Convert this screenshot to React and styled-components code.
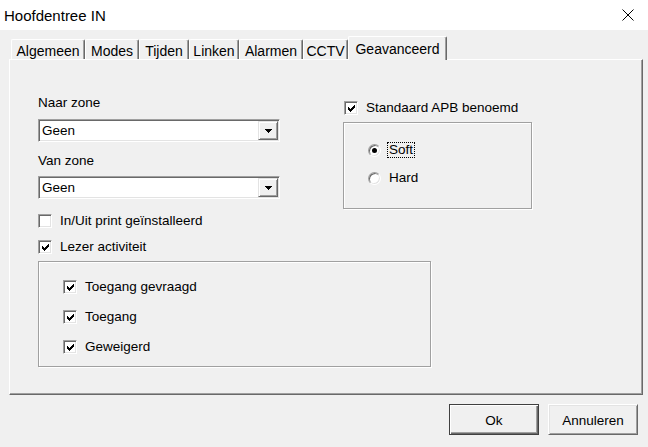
import React from 'react';
import styled, { createGlobalStyle } from 'styled-components';

const Global = createGlobalStyle`
  html, body { margin: 0; padding: 0; background: #f0f0f0; }
  #root { width: 648px; height: 447px; }
`;

const Window = styled.div`
  width: 648px;
  height: 447px;
  display: flex;
  flex-direction: column;
  background: #f0f0f0;
  overflow: hidden;
  font-family: "Liberation Sans", Arial, sans-serif;
  font-size: 13.5px;
  color: #000;
`;

const TitleBar = styled.div`
  flex: none;
  height: 30px;
  background: #fff;
  display: flex;
  align-items: center;
  justify-content: space-between;
  padding-left: 4px;
`;

const Title = styled.span`
  font-size: 15px;
  line-height: 30px;
  padding-top: 2px;
`;

const CloseButton = styled.div`
  width: 40px;
  height: 30px;
  display: flex;
  align-items: center;
  justify-content: center;
`;

const Body = styled.div`
  flex: 1;
  display: flex;
  flex-direction: column;
  padding: 6px 5px 0 9px;
`;

const TabStrip = styled.div`
  display: flex;
  align-items: flex-end;
  height: 23px;
  padding-left: 2px;
`;

const Tab = styled.div`
  box-sizing: border-box;
  width: ${(p) => p.$w}px;
  height: ${(p) => (p.$active ? 24 : 20)}px;
  margin-bottom: ${(p) => (p.$active ? -1 : 0)}px;
  position: relative;
  z-index: ${(p) => (p.$active ? 1 : 0)};
  background: #f0f0f0;
  border-top: 1px solid #fff;
  border-left: 1px solid #fff;
  border-right: 1px solid #696969;
  border-radius: 2px 2px 0 0;
  box-shadow: inset -1px 0 0 #a0a0a0;
  display: flex;
  align-items: center;
  justify-content: center;
  padding-top: ${(p) => (p.$active ? 0 : 2)}px;
  font-size: 14px;
  line-height: 16px;
  white-space: nowrap;
`;

const Panel = styled.div`
  box-sizing: border-box;
  width: 634px;
  height: 336px;
  border-top: 1px solid #fff;
  border-left: 1px solid #fff;
  border-right: 1px solid #696969;
  border-bottom: 1px solid #696969;
  box-shadow: inset -1px -1px 0 #a0a0a0;
  padding: 35px 0 0 28px;
  display: grid;
  grid-template-columns: 305px 189px;
  grid-template-rows: auto auto;
  align-content: start;
  row-gap: 6px;
  align-items: start;
`;

const LeftColumn = styled.div`
  display: flex;
  flex-direction: column;
  width: 242px;
`;

const RightColumn = styled.div`
  display: flex;
  flex-direction: column;
  margin-top: 5px;
`;

const FieldLabel = styled.div`
  line-height: 16px;
  height: 16px;
  margin-top: ${(p) => p.$mt || 0}px;
`;

const Select = styled.div`
  box-sizing: border-box;
  width: 242px;
  height: 23px;
  margin-top: ${(p) => p.$mt || 0}px;
  background: #fff;
  border: 1px solid;
  border-color: #a0a0a0 #fff #fff #a0a0a0;
  box-shadow: inset 1px 1px 0 #696969, inset -1px -1px 0 #e3e3e3;
  padding: 1px 1px 1px 3px;
  display: flex;
  align-items: center;
  justify-content: space-between;
`;

const SelectValue = styled.span`
  line-height: 16px;
  padding-top: 1px;
`;

const DropButton = styled.div`
  box-sizing: border-box;
  width: 20px;
  height: 19px;
  background: #f0f0f0;
  border: 1px solid;
  border-color: #e3e3e3 #696969 #696969 #e3e3e3;
  box-shadow: inset 1px 1px 0 #fff, inset -1px -1px 0 #a0a0a0;
  display: flex;
  align-items: center;
  justify-content: center;
`;

const CheckRow = styled.div`
  display: flex;
  align-items: center;
  gap: 8px;
  height: 16px;
  line-height: 16px;
  margin-top: ${(p) => p.$mt || 0}px;
  margin-left: ${(p) => p.$ml || 0}px;
`;

const Box = styled.div`
  box-sizing: border-box;
  flex: none;
  width: 14px;
  height: 14px;
  background: #fff;
  border: 1px solid;
  border-color: #a0a0a0 #fff #fff #a0a0a0;
  box-shadow: inset 1px 1px 0 #696969, inset -1px -1px 0 #e3e3e3;
  display: flex;
  align-items: center;
  justify-content: center;
`;

const GroupBox = styled.div`
  box-sizing: border-box;
  width: ${(p) => p.$w}px;
  height: ${(p) => p.$h}px;
  border: 1px solid #a0a0a0;
  box-shadow: 1px 1px 0 #fff, inset 1px 1px 0 #fff;
  padding: ${(p) => p.$pt}px 0 0 24px;
  display: flex;
  flex-direction: column;
  gap: ${(p) => p.$gap}px;
  margin-top: ${(p) => p.$mt || 0}px;
`;

const BottomGroup = styled.div`
  grid-column: 1 / span 2;
`;

const RadioRow = styled.div`
  display: flex;
  align-items: center;
  gap: 6px;
  height: 16px;
  line-height: 14px;
`;

const RadioCircle = styled.div`
  box-sizing: border-box;
  flex: none;
  width: 13px;
  height: 13px;
  border-radius: 50%;
  background: #fff;
  border: 1px solid;
  border-color: #a0a0a0 #fff #fff #a0a0a0;
  box-shadow: inset 1px 1px 0 #696969, inset -1px -1px 0 #e3e3e3;
  display: flex;
  align-items: center;
  justify-content: center;
  &::after {
    content: '';
    display: ${(p) => (p.$on ? 'block' : 'none')};
    width: 5px;
    height: 5px;
    border-radius: 50%;
    background: #000;
  }
`;

const RadioLabel = styled.span`
  border: 1px dotted ${(p) => (p.$focus ? '#000' : 'transparent')};
  padding: 0 1px;
`;

const Footer = styled.div`
  display: flex;
  justify-content: flex-end;
  gap: 9px;
  padding: 9px 5px 0 0;
`;

const Button = styled.div`
  box-sizing: border-box;
  width: 90px;
  height: 31px;
  background: #f0f0f0;
  border: 1px solid;
  border-color: ${(p) => (p.$default ? '#404040' : '#fff #696969 #696969 #fff')};
  box-shadow: ${(p) =>
    p.$default
      ? 'inset 1px 1px 0 #fff, inset -1px -1px 0 #696969, inset -2px -2px 0 #a0a0a0'
      : 'inset 1px 1px 0 #e3e3e3, inset -1px -1px 0 #a0a0a0'};
  display: flex;
  align-items: center;
  justify-content: center;
  padding-top: 1px;
`;

const Check = () => (
  <svg width="7" height="7" viewBox="0 0 7 7" shapeRendering="crispEdges">
    <rect x="0" y="2" width="1" height="3" fill="#000" />
    <rect x="1" y="3" width="1" height="3" fill="#000" />
    <rect x="2" y="4" width="1" height="3" fill="#000" />
    <rect x="3" y="3" width="1" height="3" fill="#000" />
    <rect x="4" y="2" width="1" height="3" fill="#000" />
    <rect x="5" y="1" width="1" height="3" fill="#000" />
    <rect x="6" y="0" width="1" height="3" fill="#000" />
  </svg>
);

const Arrow = () => (
  <svg width="7" height="4" viewBox="0 0 7 4" shapeRendering="crispEdges">
    <polygon points="0,0 7,0 3.5,4" fill="#000" />
  </svg>
);

const CheckBox = ({ checked, label, mt, ml }) => (
  <CheckRow $mt={mt} $ml={ml}>
    <Box>{checked && <Check />}</Box>
    <span>{label}</span>
  </CheckRow>
);

const Radio = ({ on, focus, label }) => (
  <RadioRow>
    <RadioCircle $on={on} />
    <RadioLabel $focus={focus}>{label}</RadioLabel>
  </RadioRow>
);

const tabs = [
  ['Algemeen', 74],
  ['Modes', 54],
  ['Tijden', 50],
  ['Linken', 50],
  ['Alarmen', 64],
  ['CCTV', 45],
  ['Geavanceerd', 99, true],
];

export default function App() {
  return (
    <>
      <Global />
      <Window>
        <TitleBar>
          <Title>Hoofdentree IN</Title>
          <CloseButton>
            <svg width="12" height="12" viewBox="0 0 12 12">
              <path d="M0.5 0.5 L11.5 11.5 M11.5 0.5 L0.5 11.5" stroke="#000" strokeWidth="1" />
            </svg>
          </CloseButton>
        </TitleBar>
        <Body>
          <TabStrip>
            {tabs.map(([t, w, a]) => (
              <Tab key={t} $w={w} $active={a}>
                {t}
              </Tab>
            ))}
          </TabStrip>
          <Panel>
            <LeftColumn>
              <FieldLabel>Naar zone</FieldLabel>
              <Select $mt={8}>
                <SelectValue>Geen</SelectValue>
                <DropButton>
                  <Arrow />
                </DropButton>
              </Select>
              <FieldLabel $mt={11}>Van zone</FieldLabel>
              <Select $mt={7}>
                <SelectValue>Geen</SelectValue>
                <DropButton>
                  <Arrow />
                </DropButton>
              </Select>
              <CheckBox mt={14} label="In/Uit print geïnstalleerd" />
              <CheckBox mt={10} checked label="Lezer activiteit" />
            </LeftColumn>
            <RightColumn>
              <CheckBox ml={1} checked label="Standaard APB benoemd" />
              <GroupBox $w={189} $h={87} $pt={19} $gap={12} $mt={6}>
                <Radio on focus label="Soft" />
                <Radio label="Hard" />
              </GroupBox>
            </RightColumn>
            <BottomGroup>
              <GroupBox $w={393} $h={106} $pt={17} $gap={14}>
                <CheckBox checked label="Toegang gevraagd" />
                <CheckBox checked label="Toegang" />
                <CheckBox checked label="Geweigerd" />
              </GroupBox>
            </BottomGroup>
          </Panel>
          <Footer>
            <Button $default>Ok</Button>
            <Button>Annuleren</Button>
          </Footer>
        </Body>
      </Window>
    </>
  );
}
